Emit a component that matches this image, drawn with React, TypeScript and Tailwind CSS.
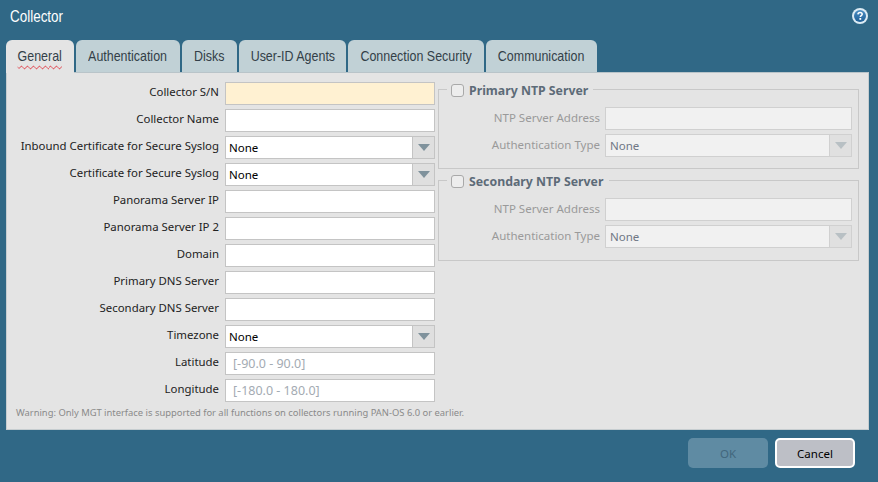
import React from "react";

const tabs = [
  { name: "General", w: "w-[68px]" },
  { name: "Authentication", w: "w-[104px]" },
  { name: "Disks", w: "w-[55px]" },
  { name: "User-ID Agents", w: "w-[107px]" },
  { name: "Connection Security", w: "w-[136px]" },
  { name: "Communication", w: "w-[111px]" },
];

const body = "[font-family:'Noto_Sans','DejaVu_Sans',sans-serif]";

function Caret({ dim }: { dim?: boolean }) {
  return (
    <svg width="12" height="7" viewBox="0 0 12 7" className={dim ? "opacity-40" : ""}>
      <path d="M0 0H12L6 7Z" fill="#7f929c" />
    </svg>
  );
}

function TextBox({ bg = "bg-white", placeholder }: { bg?: string; placeholder?: string }) {
  return (
    <div className={`w-[210px] h-[23px] border border-[#c4c4c4] ${bg} pl-[7px] text-[12.5px] leading-[21px] text-[#a4abb3]`}>
      {placeholder}
    </div>
  );
}

function Select() {
  return (
    <div className="w-[210px] h-[23px] border border-[#c4c4c4] flex">
      <div className="flex-1 bg-white pl-[3px] text-[11.5px] leading-[22px] text-black">None</div>
      <div className="w-[22px] bg-[#dfdfdf] border-l border-[#c4c4c4] flex items-center justify-center">
        <Caret />
      </div>
    </div>
  );
}

function Row({ label, children }: { label: string; children: React.ReactNode }) {
  return (
    <div className="flex items-center h-[23px] gap-[6px]">
      <div className="w-[212px] text-right text-[11.4px] text-[#222222] whitespace-nowrap leading-[20px] pb-[3px]">{label}</div>
      {children}
    </div>
  );
}

function NtpGroup({ title, legendW, h }: { title: string; legendW: string; h: string }) {
  return (
    <fieldset className={`border border-[#c8c8c8] w-[421px] ${h} px-[6px] min-w-0`}>
      <legend className={`ml-[2px] ${legendW} h-[16px] flex items-center gap-[5px] pl-[4px] pt-[4px]`}>
        <span className="w-[13px] h-[13px] -mt-[2px] rounded-[3px] border border-[#a9a9a9] bg-[#ededed]" />
        <span className="text-[12.3px] font-bold text-[#5d6b78] whitespace-nowrap">{title}</span>
      </legend>
      <div className="flex flex-col gap-[4px] mt-[10px]">
        <div className="flex items-center gap-[5px] h-[23px]">
          <div className="w-[155px] text-right text-[11.5px] text-[#9a9a9a] pb-[2px]">NTP Server Address</div>
          <div className="w-[247px] h-[23px] border border-[#d0d0d0] bg-[#f1f1f1]" />
        </div>
        <div className="flex items-center gap-[5px] h-[23px]">
          <div className="w-[155px] text-right text-[11.5px] text-[#9a9a9a] pb-[2px]">Authentication Type</div>
          <div className="w-[247px] h-[23px] border border-[#d0d0d0] flex">
            <div className="flex-1 bg-[#f1f1f1] pl-[4px] text-[11.5px] leading-[22px] text-[#6f7785]">None</div>
            <div className="w-[22px] bg-[#e0e0e0] border-l border-[#d0d0d0] flex items-center justify-center">
              <Caret dim />
            </div>
          </div>
        </div>
      </div>
    </fieldset>
  );
}

export default function App() {
  return (
    <div className={`w-[878px] h-[482px] bg-[#306886] flex flex-col overflow-hidden ${body}`}>
      <div className="h-[40px] shrink-0 flex justify-between pl-[10px] pr-[10px]">
        <div className="mt-[5px] text-[16px] leading-[24px] text-white [font-family:'Liberation_Sans',sans-serif] scale-x-[0.84] origin-left">Collector</div>
        <svg width="16" height="16" viewBox="0 0 16 16" className="mt-[8px]">
          <defs>
            <linearGradient id="helpBlue" x1="0" y1="0" x2="0" y2="1">
              <stop offset="0" stopColor="#4c8fc4" />
              <stop offset="1" stopColor="#1f5f96" />
            </linearGradient>
          </defs>
          <circle cx="8" cy="8" r="8" fill="#dcebf4" />
          <circle cx="8" cy="8" r="6" fill="url(#helpBlue)" />
          <path d="M5.9 6.4C6 5 7 4.4 8.1 4.4 9.4 4.4 10.2 5.2 10.2 6.2 10.2 7.6 8.3 7.6 8.3 9" fill="none" stroke="#fff" strokeWidth="1.5" />
          <rect x="7.4" y="10" width="1.8" height="1.8" fill="#fff" />
        </svg>
      </div>
      <div className="h-[32px] shrink-0 flex gap-[2px] pl-[6px] [font-family:'Liberation_Sans',sans-serif]">
        {tabs.map((t, i) => (
          <div
            key={t.name}
            className={`${t.w} rounded-t-[6px] flex justify-center text-[15px] text-[#333f48] pt-[5px] leading-[22px] ${i === 0 ? "h-[33px] bg-[#e4e4e4] relative z-10" : "h-[32px] bg-[#c1d1d6]"}`}
          >
            <span className={`shrink-0 whitespace-nowrap h-fit scale-x-[0.83] ${i === 0 ? "underline decoration-wavy decoration-[#e0323c] decoration-1 underline-offset-[4px]" : ""}`}>
              {t.name}
            </span>
          </div>
        ))}
      </div>
      <div className="ml-[6px] w-[863px] h-[358px] shrink-0 bg-[#e4e4e4] border border-[#c6cdd0] border-t-[#b9c4c9] flex flex-col">
        <div className="flex">
          <div className="flex flex-col gap-[4px] pt-[9px]">
            <Row label="Collector S/N"><TextBox bg="bg-[#fff1d2]" /></Row>
            <Row label="Collector Name"><TextBox /></Row>
            <Row label="Inbound Certificate for Secure Syslog"><Select /></Row>
            <Row label="Certificate for Secure Syslog"><Select /></Row>
            <Row label="Panorama Server IP"><TextBox /></Row>
            <Row label="Panorama Server IP 2"><TextBox /></Row>
            <Row label="Domain"><TextBox /></Row>
            <Row label="Primary DNS Server"><TextBox /></Row>
            <Row label="Secondary DNS Server"><TextBox /></Row>
            <Row label="Timezone"><Select /></Row>
            <Row label="Latitude"><TextBox placeholder="[-90.0 - 90.0]" /></Row>
            <Row label="Longitude"><TextBox placeholder="[-180.0 - 180.0]" /></Row>
          </div>
          <div className="ml-[3px] pt-[8px] flex flex-col gap-[3px]">
            <NtpGroup title="Primary NTP Server" legendW="w-[146px]" h="h-[88px]" />
            <NtpGroup title="Secondary NTP Server" legendW="w-[162px]" h="h-[89px]" />
          </div>
        </div>
        <div className="mt-[4px] pl-[9px] text-[9.4px] leading-[14px] text-[#8a8a8a] whitespace-nowrap">
          Warning: Only MGT interface is supported for all functions on collectors running PAN-OS 6.0 or earlier.
        </div>
      </div>
      <div className="flex justify-end gap-[7px] pr-[23px] pt-[8px]">
        <div className="w-[80px] h-[30px] rounded-[5px] bg-[#5f8ba3] flex items-center justify-center text-[11.5px] text-[#42677d] pt-[1px]">OK</div>
        <div className="w-[80px] h-[30px] rounded-[5px] bg-[#bdbfc6] border-2 border-white flex items-center justify-center text-[11.5px] text-black pt-[1px]">Cancel</div>
      </div>
    </div>
  );
}
